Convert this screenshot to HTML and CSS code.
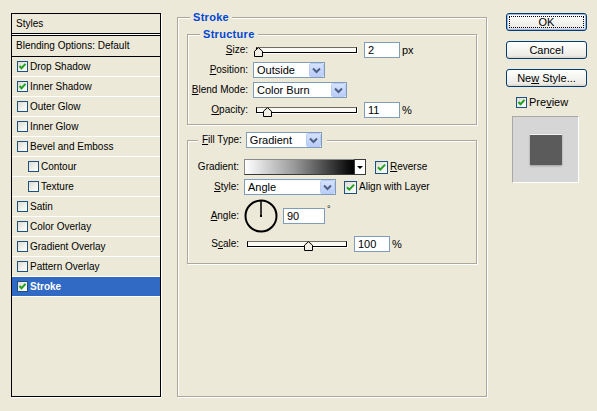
FILE: index.html
```html
<!DOCTYPE html>
<html>
<head>
<meta charset="utf-8">
<title>Layer Style</title>
<link rel="stylesheet" href="styles.css">
</head>
<body>
<div class="dialog">
  <div class="styles-panel">
    <div class="panel-head">Styles</div>
    <div class="panel-sep"></div>
    <div class="panel-blend">Blending Options: Default</div>
    <ul class="style-list">
      <li class="item"><span class="cb sm on"><svg viewBox="0 0 11 11"><path d="M2.5 5l2 2.2 4-4.4"/></svg></span><span>Drop Shadow</span></li>
      <li class="item"><span class="cb sm on"><svg viewBox="0 0 11 11"><path d="M2.5 5l2 2.2 4-4.4"/></svg></span><span>Inner Shadow</span></li>
      <li class="item"><span class="cb sm"></span><span>Outer Glow</span></li>
      <li class="item"><span class="cb sm"></span><span>Inner Glow</span></li>
      <li class="item"><span class="cb sm"></span><span>Bevel and Emboss</span></li>
      <li class="item indent"><span class="cb sm"></span><span>Contour</span></li>
      <li class="item indent"><span class="cb sm"></span><span>Texture</span></li>
      <li class="item"><span class="cb sm"></span><span>Satin</span></li>
      <li class="item"><span class="cb sm"></span><span>Color Overlay</span></li>
      <li class="item"><span class="cb sm"></span><span>Gradient Overlay</span></li>
      <li class="item"><span class="cb sm"></span><span>Pattern Overlay</span></li>
      <li class="item selected"><span class="cb sm on"><svg viewBox="0 0 11 11"><path d="M2.5 5l2 2.2 4-4.4"/></svg></span><span>Stroke</span></li>
    </ul>
  </div>

  <fieldset class="group main">
    <legend class="title">Stroke</legend>
    <div class="main-body">
      <fieldset class="group structure">
        <legend class="title">Structure</legend>
        <div class="rows s-rows">
          <div class="row">
            <span class="lbl s-lbl"><u>S</u>ize:</span>
            <div class="slider s-slider">
              <div class="track"></div>
              <svg class="thumb" style="left:1px" viewBox="0 0 9 10"><path d="M0.5 9.5V4.2L4.5 0.7L8.5 4.2V9.5Z"/></svg>
            </div>
            <span class="field w36">2</span><span class="unit">px</span>
          </div>
          <div class="row">
            <span class="lbl s-lbl"><u>P</u>osition:</span>
            <div class="select w72"><span class="sel-text">Outside</span><span class="sel-btn"><svg viewBox="0 0 15 14"><path d="M4 5.5l3.5 3.5 3.5-3.5"/></svg></span></div>
          </div>
          <div class="row">
            <span class="lbl s-lbl"><u>B</u>lend Mode:</span>
            <div class="select w94"><span class="sel-text">Color Burn</span><span class="sel-btn"><svg viewBox="0 0 15 14"><path d="M4 5.5l3.5 3.5 3.5-3.5"/></svg></span></div>
          </div>
          <div class="row">
            <span class="lbl s-lbl"><u>O</u>pacity:</span>
            <div class="slider s-slider">
              <div class="track"></div>
              <svg class="thumb" style="left:10px" viewBox="0 0 9 10"><path d="M0.5 9.5V4.2L4.5 0.7L8.5 4.2V9.5Z"/></svg>
            </div>
            <span class="field w36">11</span><span class="unit">%</span>
          </div>
        </div>
      </fieldset>

      <fieldset class="group fill">
        <legend class="fill-legend"><span><u>F</u>ill Type:</span>
          <span class="select w76 legend-select"><span class="sel-text">Gradient</span><span class="sel-btn"><svg viewBox="0 0 15 14"><path d="M4 5.5l3.5 3.5 3.5-3.5"/></svg></span></span>
        </legend>
        <div class="rows f-rows">
          <div class="row">
            <span class="lbl f-lbl">Gradient:</span>
            <span class="gradient"></span><span class="grad-btn"><svg viewBox="0 0 10 14"><path d="M2 6h6l-3 3z"/></svg></span>
            <span class="cb lg on gap-rev"><svg viewBox="0 0 13 13"><path d="M3 6.2l2.3 2.4 4.8-5"/></svg></span><span class="cb-text"><u>R</u>everse</span>
          </div>
          <div class="row">
            <span class="lbl f-lbl"><u>S</u>tyle:</span>
            <div class="select w92"><span class="sel-text">Angle</span><span class="sel-btn"><svg viewBox="0 0 15 14"><path d="M4 5.5l3.5 3.5 3.5-3.5"/></svg></span></div>
            <span class="cb lg on gap-align"><svg viewBox="0 0 13 13"><path d="M3 6.2l2.3 2.4 4.8-5"/></svg></span><span class="cb-text">Align with Layer</span>
          </div>
          <div class="row angle-row">
            <span class="lbl f-lbl"><u>A</u>ngle:</span>
            <svg class="dial" viewBox="0 0 34 34"><circle cx="17" cy="17" r="15.5"/><line x1="17" y1="17" x2="17" y2="2"/><rect x="16" y="16" width="2" height="2"/></svg>
            <span class="field w42 angle-field">90</span><span class="deg">°</span>
          </div>
          <div class="row">
            <span class="lbl f-lbl">S<u>c</u>ale:</span>
            <div class="slider f-slider">
              <div class="track"></div>
              <svg class="thumb" style="left:60px" viewBox="0 0 9 10"><path d="M0.5 9.5V4.2L4.5 0.7L8.5 4.2V9.5Z"/></svg>
            </div>
            <span class="field w36">100</span><span class="unit">%</span>
          </div>
        </div>
      </fieldset>
    </div>
  </fieldset>

  <div class="actions">
    <div class="btn default"><span>OK</span></div>
    <div class="btn"><span>Cancel</span></div>
    <div class="btn"><span>Ne<u>w</u> Style...</span></div>
    <div class="preview-check"><span class="cb sm on"><svg viewBox="0 0 11 11"><path d="M2.5 5l2 2.2 4-4.4"/></svg></span><span>Pre<u>v</u>iew</span></div>
    <div class="preview-box"><div class="swatch"></div></div>
  </div>
</div>
</body>
</html>
```
FILE: styles.css
```css
* { box-sizing: border-box; }
html, body { margin: 0; padding: 0; }
body {
  background: #ECE9D8;
  width: 597px;
  height: 411px;
  overflow: hidden;
  font: 10px/12px "Liberation Sans", Arial, sans-serif;
  color: #000;
}
u { text-decoration: underline; text-underline-offset: 1px; }

.dialog { display: flex; align-items: flex-start; padding-left: 11px; }

/* Styles list */
.styles-panel {
  margin-top: 13px;
  width: 150px;
  height: 384px;
  border: 1px solid #000;
  box-shadow: 1px 1px 0 #fff;
  display: flex;
  flex-direction: column;
}
.panel-head { height: 20px; line-height: 19px; padding-left: 4px; border-bottom: 1px solid #000; }
.panel-sep { height: 1px; background: #fff; }
.panel-blend { height: 22px; line-height: 20px; padding-left: 4px; border-top: 1px solid #000; border-bottom: 1px solid #000; }
.style-list { list-style: none; margin: 0; padding: 0; }
.item {
  height: 20px;
  border-bottom: 1px solid #fff;
  display: flex;
  align-items: center;
  gap: 2px;
  padding-left: 5px;
}
.item.indent { padding-left: 16px; }
.item.selected { background: #316AC5; color: #fff; font-weight: bold; }

/* checkboxes */
.cb {
  display: inline-flex;
  flex: none;
  border: 1px solid #1C5180;
  background: linear-gradient(135deg, #DCDCD7 0%, #F2F2EE 60%, #fff 100%);
}
.cb.sm { width: 11px; height: 11px; }
.cb.lg { width: 13px; height: 13px; }
.cb svg { margin: -1px; width: calc(100% + 2px); height: calc(100% + 2px); }
.cb path { fill: none; stroke: #21A121; stroke-width: 2; }
.cb-text { margin-left: 2px; }

/* group boxes */
.group {
  margin: 0;
  padding: 0;
  min-width: 0;
  border: 1px solid #ACA899;
  box-shadow: inset 1px 1px 0 #fff, 1px 1px 0 #fff;
}
.title {
  padding: 0 3px;
  font-size: 11px;
  line-height: 12px;
  font-weight: bold;
  color: #0046D5;
  letter-spacing: 0.3px;
  background: #ECE9D8;
}
.main { margin: 11px 0 0 16px; width: 310px; height: 386px; }
.main > .title { margin-left: 12px; }
.main-body { padding: 5px 9px 0 9px; }

.structure { width: 290px; }
.structure > .title { margin-left: 12px; }
.fill { width: 290px; margin-top: 7px; }
.fill-legend {
  margin-left: 10px;
  padding: 0 5px 0 4px;
  display: flex;
  align-items: center;
  background: #ECE9D8;
}
.legend-select { margin-left: 4px; }

.rows { display: flex; flex-direction: column; }
.s-rows { padding: 2px 0 6px; gap: 4px; }
.f-rows { padding: 11px 0 11px; }
.f-rows .row + .row { margin-top: 4px; }
.f-rows .angle-row { margin-top: 3px; height: 34px; }
.f-rows .angle-row + .row { margin-top: 3px; }

.row { display: flex; align-items: center; height: 16px; }
.lbl { text-align: right; flex: none; margin-right: 5px; }
.s-lbl { width: 60px; }
.f-lbl { width: 51px; }

/* slider */
.slider { position: relative; height: 16px; display: flex; align-items: center; flex: none; }
.s-slider { width: 107px; }
.f-slider { width: 106px; }
.track {
  margin-left: 3px;
  height: 6px;
  border: 1px solid #000;
  border-top-color: #6f6d62;
  background: #FBFAF4;
  box-shadow: 1px 1px 0 #fff;
}
.s-slider .track { width: 101px; }
.f-slider .track { width: 100px; }
.thumb { position: absolute; top: 5px; width: 9px; height: 10px; }
.thumb path { fill: #F3F1E6; stroke: #000; stroke-width: 1; }

/* fields */
.field {
  flex: none;
  height: 16px;
  border: 1px solid #7F9DB9;
  background: #fff;
  padding-left: 3px;
  line-height: 14px;
  font-size: 11px;
  margin-left: 4px;
}
.w36 { width: 36px; }
.w42 { width: 42px; }
.unit { margin-left: 2px; font-size: 11px; }
.angle-field { margin-left: 5px; }
.deg { align-self: flex-start; margin: 6px 0 0 2px; font-size: 9px; line-height: 9px; }

/* select */
.select {
  flex: none;
  display: flex;
  align-items: center;
  justify-content: space-between;
  height: 16px;
  border: 1px solid #7F9DB9;
  background: #fff;
  font-weight: normal;
}
.w72 { width: 72px; }
.w94 { width: 94px; }
.w76 { width: 76px; }
.w92 { width: 92px; }
.sel-text { padding-left: 3px; font-size: 11px; }
.sel-btn {
  width: 15px;
  height: 14px;
  border: 1px solid #B9CCF6;
  border-radius: 2px;
  background: linear-gradient(#D6E2FD, #BACDF8);
  display: flex;
}
.sel-btn svg { margin: -1px; width: 15px; height: 14px; }
.sel-btn path { fill: none; stroke: #4D6185; stroke-width: 2; }

/* gradient picker */
.gradient {
  flex: none;
  width: 111px;
  height: 16px;
  border: 1px solid #3A3A3A;
  border-top-color: #8a8a8a;
  border-left-color: #8a8a8a;
  background: linear-gradient(to right, #fff, #9a9a9a 45%, #000);
}
.grad-btn {
  flex: none;
  width: 12px;
  height: 16px;
  margin-left: -1px;
  border: 1px solid #3A3A3A;
  background: #fff;
  display: flex;
}
.grad-btn svg { width: 10px; height: 14px; }
.grad-btn path { fill: #000; }
.gap-rev { margin-left: 9px; }
.gap-align { margin-left: 8px; }

/* dial */
.dial { width: 34px; height: 34px; flex: none; }
.dial circle { fill: none; stroke: #000; stroke-width: 2; }
.dial line { stroke: #000; stroke-width: 1.5; }
.dial rect { fill: #000; }

/* buttons */
.actions { margin: 13px 0 0 19px; width: 81px; display: flex; flex-direction: column; }
.btn {
  height: 18px;
  border: 1px solid #003C74;
  border-radius: 3px;
  background: linear-gradient(#FFFFFF, #F6F6F3 40%, #ECEBE6 85%, #D8D2C6);
  display: flex;
  align-items: center;
  justify-content: center;
  font-size: 11px;
}
.btn + .btn { margin-top: 10px; }
.btn.default {
  box-shadow: inset 0 0 0 1px #9DB7E8;
  outline: 1px dotted #000;
  outline-offset: -4px;
}
.preview-check { margin: 9px 0 0 10px; display: flex; align-items: center; gap: 2px; font-size: 11px; height: 12px; }
.preview-box {
  margin: 8px 0 0 6px;
  width: 67px;
  height: 67px;
  background: #D6D6D6;
  border: 1px solid #fff;
  border-top-color: #A9A8A4;
  border-left-color: #A9A8A4;
  display: flex;
  align-items: center;
  justify-content: center;
}
.swatch {
  width: 32px;
  height: 31px;
  background: #5B5B5B;
  border-top: 1px solid #F4F4F4;
  box-shadow: 0 1px 2px #9a9a9a;
}
```
